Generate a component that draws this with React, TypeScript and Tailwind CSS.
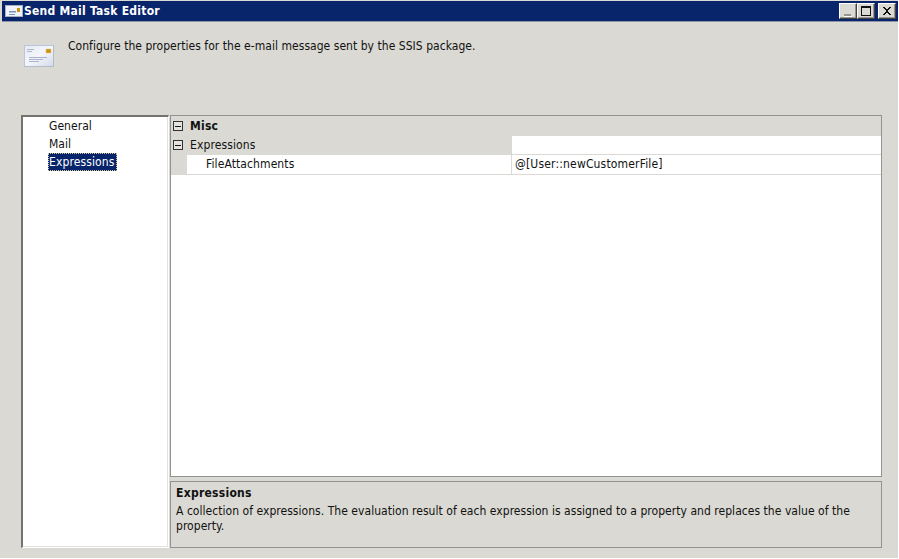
import React from 'react';

const pages = ['General', 'Mail', 'Expressions'];

function SmallMailIcon() {
  return (
    <svg width="18" height="12" viewBox="0 0 18 12" shapeRendering="crispEdges" className="block">
      <rect width="18" height="12" fill="#a9aebc" />
      <rect x="1" y="1" width="16" height="10" fill="#f1f3fa" />
      <rect x="12" y="3" width="3" height="4" fill="#cf9411" />
      <path d="M4 6.5h7M4 9.5h6" stroke="#7b94bd" />
      <path d="M4 7.5h7" stroke="#b3c4de" />
    </svg>
  );
}

function MailIcon() {
  return (
    <svg width="31" height="23" viewBox="0 0 31 23" className="block">
      <defs>
        <linearGradient id="paper" x1="0" y1="0" x2="1" y2="1">
          <stop offset="0" stopColor="#e6e9f4" />
          <stop offset="0.5" stopColor="#f5f6fc" />
          <stop offset="1" stopColor="#d3d8ea" />
        </linearGradient>
      </defs>
      <rect x="0.5" y="0.5" width="29" height="21" fill="url(#paper)" stroke="#bdc5db" />
      <path d="M0 21.5h30M29.5 1v21" stroke="#b5bbca" />
      <path d="M3 4.5h7M3 6.5h5" stroke="#b0b6c6" />
      <path d="M5 12.5h18M5 14.5h14M5 16.5h10" stroke="#a9b3cc" />
      <rect x="22" y="4" width="5" height="4" fill="#cc930d" stroke="#e3c984" strokeWidth="0.5" />
    </svg>
  );
}

function CaptionButton({ label, children }: { label: string; children: React.ReactNode }) {
  return (
    <button
      aria-label={label}
      className="h-4 w-[18px] border border-t-white border-l-white border-r-[#45443f] border-b-[#45443f] bg-[#dad9d3] shadow-[inset_-1px_-1px_#96958f]"
    >
      <svg width="16" height="14" viewBox="0 0 16 14" shapeRendering="crispEdges" className="block">
        {children}
      </svg>
    </button>
  );
}

function Expander() {
  return (
    <svg width="11" height="11" viewBox="0 0 11 11" shapeRendering="crispEdges" className="block">
      <rect x="0.5" y="0.5" width="9" height="9" fill="#e4e3de" stroke="#33332f" />
      <path d="M2 5.5h6" stroke="#171717" />
    </svg>
  );
}

export default function App() {
  return (
    <div className="h-[559px] w-[899px] bg-white font-['DejaVu_Sans_Condensed','DejaVu_Sans',sans-serif] text-[12px] leading-[15px] tracking-[0.04px] whitespace-nowrap text-[#111]">
      <div className="flex h-[558px] w-[898px] flex-col bg-[#dad9d3] pt-px pl-0.5">
        <header className="flex h-[21px] shrink-0 items-center border-b border-[#8d94a8] bg-[#08246b] pr-0.5 pl-[3px]">
          <SmallMailIcon />
          <h1 className="ml-px flex-1 text-[12px] font-bold tracking-[0.25px] text-white">Send Mail Task Editor</h1>
          <CaptionButton label="Minimize">
            <path d="M4 10h7v2h-7z" fill="#96958f" />
            <path d="M4 12h8v1h-8z" fill="#fff" />
          </CaptionButton>
          <CaptionButton label="Maximize">
            <path d="M3 2h10v10h-10zM4 4v7h8v-7z" fill="#111" fillRule="evenodd" />
          </CaptionButton>
          <div className="w-[3px]" />
          <CaptionButton label="Close">
            <path d="M4 3h2v1h1v1h2v-1h1v-1h2v1h-1v1h-1v1h-1v2h1v1h1v1h1v1h-2v-1h-1v-1h-2v1h-1v1h-2v-1h1v-1h1v-1h1v-2h-1v-1h-1v-1h-1z" fill="#111" />
          </CaptionButton>
        </header>

        <section className="flex h-[93px] shrink-0 pl-[22px]">
          <div className="pt-[23px]">
            <MailIcon />
          </div>
          <p className="pt-[17px] pl-[13px]">Configure the properties for the e-mail message sent by the SSIS package.</p>
        </section>

        <main className="flex h-[433px] gap-px pl-[19px]">
          <nav className="w-[148px] border-t-2 border-r border-b border-l-2 border-t-[#74736f] border-r-white border-b-white border-l-[#74736f] bg-white pl-[25px] shadow-[inset_-1px_-1px_#e3e2dd]">
            {pages.map((page) => (
              <div key={page} className="flex h-[18px] items-center">
                <span
                  className={
                    page === 'Expressions'
                      ? 'h-[18px] w-[69px] border border-dotted border-[#d9c98f] bg-[#08246b] leading-4 tracking-[0.12px] text-white'
                      : 'pl-px leading-[18px]'
                  }
                >
                  {page}
                </span>
              </div>
            ))}
          </nav>

          <div className="flex w-[712px] flex-col gap-1">
            <div className="h-[362px] border border-[#929292] bg-white">
              <div className="flex h-5 items-center bg-[#dad9d3] pl-0.5 font-bold tracking-[0.25px]">
                <Expander />
                <span className="pl-[6px]">Misc</span>
              </div>
              <div className="flex h-[19px]">
                <div className="flex w-[341px] items-center bg-[#dad9d3] pl-0.5">
                  <Expander />
                  <span className="pl-[6px] tracking-[0.12px]">Expressions</span>
                </div>
                <div className="flex-1 border-b border-[#dad9d3]" />
              </div>
              <div className="flex h-5">
                <div className="w-4 bg-[#dad9d3]" />
                <div className="flex w-[325px] items-center border-r border-b border-[#dad9d3] pl-[19px] tracking-[0.1px]">FileAttachments</div>
                <div className="flex flex-1 items-center border-b border-[#dad9d3] pl-[3px] tracking-[0.17px]">@[User::newCustomerFile]</div>
              </div>
            </div>

            <div className="h-[67px] border border-[#929292] px-[5px] pt-1">
              <h2 className="text-[12px] font-bold tracking-[0.27px]">Expressions</h2>
              <p className="pt-[3px]">
                A collection of expressions. The evaluation result of each expression is assigned to a property and replaces the value of the
                <br />
                property.
              </p>
            </div>
          </div>
        </main>
      </div>
    </div>
  );
}
